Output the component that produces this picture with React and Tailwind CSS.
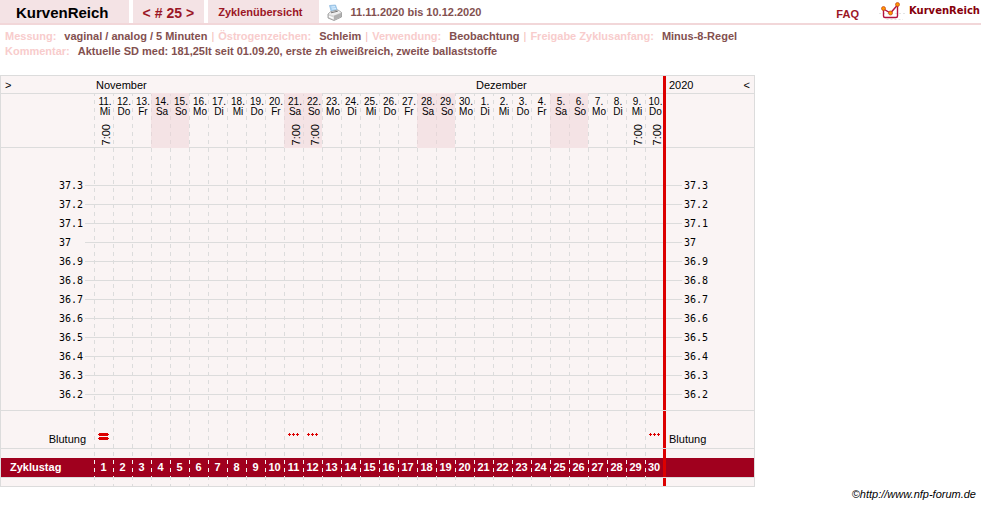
import React from 'react';

const WEEKDAYS = ['Mi', 'Do', 'Fr', 'Sa', 'So', 'Mo', 'Di'];
const TEMPS = ['37.3', '37.2', '37.1', '37', '36.9', '36.8', '36.7', '36.6', '36.5', '36.4', '36.3', '36.2'];
const TIMES = { 1: '7:00', 11: '7:00', 12: '7:00', 29: '7:00', 30: '7:00' };
const BLEEDING = { 1: 'strong', 11: 'spotting', 12: 'spotting', 30: 'spotting' };

// cycle runs from 11 November to 10 December
const DAYS = Array.from({ length: 30 }, (_, i) => ({
  cycleDay: i + 1,
  date: i < 20 ? i + 11 : i - 19,
  weekday: WEEKDAYS[i % 7],
  weekend: i % 7 === 3 || i % 7 === 4,
}));

const INFO = [
  { label: 'Messung:', value: 'vaginal / analog / 5 Minuten' },
  { label: 'Östrogenzeichen:', value: 'Schleim' },
  { label: 'Verwendung:', value: 'Beobachtung' },
  { label: 'Freigabe Zyklusanfang:', value: 'Minus-8-Regel' },
];

function PrinterIcon() {
  return (
    <svg width="16" height="18" viewBox="0 0 16 18" aria-hidden="true">
      <path d="M2.5 1.5 L8.5 1 L10.5 7 L4.5 8.5 Z" fill="#a9d3f3" stroke="#86b3da" strokeWidth="0.7" />
      <path d="M4.5 3 L8 2.6 M5 5 L9 4.5" stroke="#e8f4ff" strokeWidth="0.8" />
      <path d="M1 10 L4 7.5 L11 6 L14.5 8.5 L14.5 13 L7 16.5 L1 14 Z" fill="#d6d6d6" stroke="#909090" strokeWidth="0.8" />
      <path d="M1.5 10 L4.2 8 L11 6.5 L14 8.6 L7 11.4 Z" fill="#eeeeee" />
      <path d="M4 8.8 L10.8 7.2" stroke="#777" strokeWidth="1" />
      <path d="M7 11.7 L14.2 9 L14.2 12.8 L7 16 Z" fill="#b0b0b0" />
      <path d="M2 12.4 L6.5 14.4" stroke="#fff" strokeWidth="1.4" />
    </svg>
  );
}

function CurveLogo() {
  return (
    <svg width="26" height="20" viewBox="0 0 26 20" aria-hidden="true">
      <path d="M0 12.5 H26 M7.5 18.5 H24" stroke="#e4e4e4" strokeWidth="1" strokeDasharray="2 2" fill="none" />
      <path d="M4.5 8 V15 Q4.5 16.5 6 16.5 H17 Q18.5 16.5 18.5 15 V4" fill="none" stroke="#b3123f" strokeWidth="1.4" />
      <path d="M4.5 8 L11.5 12 L18.5 4" fill="none" stroke="#b3123f" strokeWidth="1.4" />
      <circle cx="4.5" cy="7.5" r="2" fill="#ff9500" stroke="#c2411c" strokeWidth="0.7" />
      <circle cx="11.5" cy="12" r="2" fill="#ff9500" stroke="#c2411c" strokeWidth="0.7" />
      <circle cx="18.5" cy="3.5" r="2" fill="#ff9500" stroke="#c2411c" strokeWidth="0.7" />
    </svg>
  );
}

function BleedingMark({ kind }) {
  if (kind === 'strong') {
    return (
      <svg width="11" height="7" viewBox="0 0 11 7" role="img" aria-label="stark">
        <path d="M1 0H10V1H11V2H10V3H1V2H0V1H1ZM1 4H10V5H11V6H10V7H1V6H0V5H1Z" fill="#dc0000" />
      </svg>
    );
  }
  return (
    <svg width="11" height="3" viewBox="0 0 11 3" role="img" aria-label="Schmierblutung">
      <path d="M1 0h1v1h1v1h-1v1h-1v-1h-1v-1h1zM5 0h1v1h1v1h-1v1h-1v-1h-1v-1h1zM9 0h1v1h1v1h-1v1h-1v-1h-1v-1h1z" fill="#dc0000" />
    </svg>
  );
}

function TopBar() {
  return (
    <header className="flex h-[25px] border-b-2 border-[#f2d7d9] font-bold text-[#9b1625]">
      <div className="flex gap-1">
        <h1 className="flex items-center bg-[#f4e3e5] pt-1 pr-5 pl-4 text-[15px] text-black">KurvenReich</h1>
        <nav className="flex items-center gap-1 bg-[#f4e3e5] px-2.5 pt-1 text-[14px]">
          <a href="#prev">&lt;</a>
          <span># 25</span>
          <a href="#next">&gt;</a>
        </nav>
        <a href="#cycles" className="flex items-center bg-[#f4e3e5] pt-0.5 pr-4 pl-2.5 text-[11px]">Zyklenübersicht</a>
      </div>
      <div className="flex items-center gap-2 pt-0.5 pl-2 text-[11px] text-[#83504f]">
        <button type="button" aria-label="Drucken"><PrinterIcon /></button>
        <span>11.11.2020 bis 10.12.2020</span>
      </div>
      <div className="ml-auto flex items-center pr-px text-[11px]">
        <a href="#faq" className="mr-5 pt-1.5">FAQ</a>
        <a href="#home" className="flex items-center gap-1 pb-0.5 text-[10px] font-bold text-[#86000b] [font-family:'DejaVu_Sans',sans-serif]">
          <CurveLogo />
          KurvenReich
        </a>
      </div>
    </header>
  );
}

function CycleInfo() {
  return (
    <section className="px-[5px] pt-1 text-[11px] leading-[15px] font-bold text-[#83504f]">
      <p className="flex">
        {INFO.map((item, i) => (
          <span key={item.label} className="whitespace-pre">
            {i > 0 && <span className="px-1 font-normal text-[#f4b8b8]">|</span>}
            <span className="mr-2 text-[#f8cccc]">{item.label}</span>
            {item.value}
          </span>
        ))}
      </p>
      <p>
        <span className="mr-2 text-[#f8cccc]">Kommentar:</span>
        Aktuelle SD med: 181,25lt seit 01.09.20, erste zh eiweißreich, zweite ballaststoffe
      </p>
    </section>
  );
}

function MarkerCell({ line }) {
  return <td className={line ? 'border-t border-[#dcdcdc] bg-[#dc0000]' : 'bg-[#dc0000]'} />;
}

// one empty cell per day, so that the dashed column lines run through
function EmptyDays({ className }) {
  return DAYS.map((day) => <td key={day.cycleDay} className={className} />);
}

function CycleChart() {
  return (
    <table className="mt-4 border-separate border-spacing-0 border border-[#dcdcdc] bg-[#faf4f4] text-[11px] text-black">
      <colgroup>
        <col className="w-[93px]" />
        {DAYS.map((day) => (
          <col
            key={day.cycleDay}
            className={`${day.cycleDay === 30 ? 'w-[18px]' : 'w-[19px]'} bg-[repeating-linear-gradient(#dcdcdc_0_4px,transparent_4px_8px)] bg-[length:1px_100%] bg-no-repeat`}
          />
        ))}
        <col className="w-[3px]" />
        <col className="w-[88px]" />
      </colgroup>
      <thead>
        <tr className="h-[17px] text-left leading-4 [&>th]:bg-[#faf4f4] [&>th]:pt-px [&>th]:font-normal">
          <th className="pl-1"><a href="#prev">&gt;</a></th>
          <th colSpan={20} className="pl-0.5">November</th>
          <th colSpan={10} className="pl-0.5">Dezember</th>
          <MarkerCell />
          <th>
            <span className="flex justify-between pr-1 pl-[3px]">
              2020
              <a href="#next">&lt;</a>
            </span>
          </th>
        </tr>
        <tr className="h-[54px] align-top">
          <td className="border-t border-[#dcdcdc]" />
          {DAYS.map((day) => (
            <th
              key={day.cycleDay}
              className={`border-t pt-[3px] font-normal ${day.weekend ? 'border-[#f4e3e5] bg-[#eed2d6]/50' : 'border-[#dcdcdc]'}`}
            >
              <div className="flex flex-col items-center pl-[3px] text-[10px] leading-[10px]">
                <span>{day.date}.</span>
                <span>{day.weekday}</span>
              </div>
              {TIMES[day.cycleDay] && (
                <span className="mt-[7px] ml-1.5 block w-3 rotate-180 leading-3 [writing-mode:vertical-rl]">{TIMES[day.cycleDay]}</span>
              )}
            </th>
          ))}
          <MarkerCell />
          <td className="border-t border-[#dcdcdc]" />
        </tr>
      </thead>
      <tbody>
        <tr className="h-[29px]">
          <td className="border-t border-[#dcdcdc]" />
          {DAYS.map((day) => (
            <td key={day.cycleDay} className={day.weekend ? 'border-t border-[#f4e3e5]' : 'border-t border-[#dcdcdc]'} />
          ))}
          <MarkerCell />
          <td className="border-t border-[#dcdcdc]" />
        </tr>
        {TEMPS.map((temp) => (
          <tr key={temp} className="h-[19px] text-[10px] leading-[18px] [font-family:'DejaVu_Sans_Mono',monospace]">
            <th className="font-normal">
              <span className="flex items-center text-left">
                <span className="ml-[58px] w-[26px]">{temp}</span>
                <span className="h-px flex-1 bg-[#dcdcdc]" />
              </span>
            </th>
            <EmptyDays className="bg-[linear-gradient(#dcdcdc,#dcdcdc)] bg-[length:100%_1px] bg-center bg-no-repeat" />
            <MarkerCell />
            <td>
              <span className="flex items-center">
                <span className="mr-0.5 h-px w-4 bg-[#dcdcdc]" />
                {temp}
              </span>
            </td>
          </tr>
        ))}
        <tr className="h-[6px]">
          <td />
          <EmptyDays />
          <MarkerCell />
          <td />
        </tr>
        <tr className="h-[38px] align-bottom [&>*]:border-t [&>*]:border-[#dcdcdc]">
          <th className="pr-2 text-right leading-[17px] font-normal">Blutung</th>
          {DAYS.map((day) => (
            <td key={day.cycleDay} className="pt-[22px] pl-1 align-top">
              {BLEEDING[day.cycleDay] && <BleedingMark kind={BLEEDING[day.cycleDay]} />}
            </td>
          ))}
          <MarkerCell line />
          <td className="pl-[3px] leading-[17px]">Blutung</td>
        </tr>
        <tr className="h-[10px]">
          <td className="border-t border-[#dcdcdc]" />
          <EmptyDays className="border-t border-[#dcdcdc]" />
          <MarkerCell line />
          <td className="border-t border-[#dcdcdc]" />
        </tr>
        <tr className="h-[19px] text-center leading-[19px] font-bold text-white">
          <th className="bg-[#a0001e] pl-[9px] text-left">Zyklustag</th>
          {DAYS.map((day) => (
            <td
              key={day.cycleDay}
              className="bg-[#a0001e] bg-[repeating-linear-gradient(transparent_0_2px,#f4f4f4_2px_6px,transparent_6px_8px)] bg-[length:1px_100%] bg-no-repeat"
            >
              {day.cycleDay}
            </td>
          ))}
          <MarkerCell />
          <td className="bg-[#a0001e]" />
        </tr>
        <tr className="h-[9px]">
          <td className="border-t border-[#dcdcdc]" />
          <EmptyDays className="border-t border-[#dcdcdc]" />
          <MarkerCell line />
          <td className="border-t border-[#dcdcdc]" />
        </tr>
      </tbody>
    </table>
  );
}

export default function App() {
  return (
    <div className="min-h-screen bg-white [font-family:'Liberation_Sans',Arial,sans-serif]">
      <TopBar />
      <main>
        <CycleInfo />
        <CycleChart />
      </main>
      <footer className="pr-[5px] text-right text-[11px] leading-[14px] text-black italic">
        ©<a href="#forum">http://www.nfp-forum.de</a>
      </footer>
    </div>
  );
}
